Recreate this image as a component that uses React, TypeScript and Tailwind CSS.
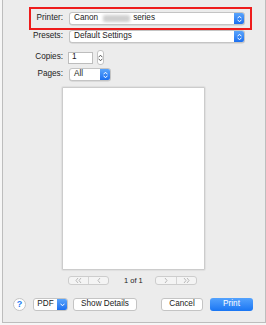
import React from 'react'

const font = { fontFamily: '"Liberation Sans", Arial, sans-serif' }

function UpDown({ color = '#fff' }: { color?: string }) {
  return (
    <svg width="5" height="8" viewBox="0 0 5 8" fill="none">
      <polyline points="0.8,3 2.5,1.2 4.2,3" stroke={color} strokeWidth="1" strokeLinecap="round" strokeLinejoin="round" />
      <polyline points="0.8,5 2.5,6.8 4.2,5" stroke={color} strokeWidth="1" strokeLinecap="round" strokeLinejoin="round" />
    </svg>
  )
}

function Popup({ width, children }: { width: string; children: React.ReactNode }) {
  return (
    <div className={`${width} h-[13px] flex rounded-[3px] border border-[#c4c4c4] bg-white shadow-[0_0.5px_0.5px_rgba(0,0,0,0.15)] overflow-hidden`}>
      <div className="flex-1 flex items-center pl-[4px] text-[#222]">{children}</div>
      <div className="w-[10px] flex items-center justify-center bg-gradient-to-b from-[#5aa4fb] to-[#1b6ff0]">
        <UpDown />
      </div>
    </div>
  )
}

function Chev({ dir, double }: { dir: 'l' | 'r'; double?: boolean }) {
  const pts = (x: number) => (dir === 'l' ? `${x + 2},1 ${x},3.5 ${x + 2},6` : `${x},1 ${x + 2},3.5 ${x},6`)
  return (
    <svg width={double ? 7 : 4} height="7" viewBox={`0 0 ${double ? 7 : 4} 7`} fill="none">
      <polyline points={pts(1)} stroke="#a9a9a9" strokeWidth="0.8" />
      {double && <polyline points={pts(4)} stroke="#a9a9a9" strokeWidth="0.8" />}
    </svg>
  )
}

export default function App() {
  return (
    <div className="w-[266px] h-[325px] bg-[#f6f6f6] text-[8.2px] text-[#222]" style={font}>
      <div className="ml-[2px] w-[264px] h-[323px] border-x border-b border-[#bdbdbd] bg-[#ececec] flex flex-col">
        {/* Printer */}
        <div className="mt-[7px] ml-[26px] w-[223px] h-[23px] border-2 border-[#ee1c1c] flex items-center">
          <div className="w-[32px] text-right">Printer:</div>
          <div className="ml-[6px]">
            <Popup width="w-[176px]">
              <span>Canon</span>
              <span className="inline-block ml-[5px] mr-[3px] w-[27px] h-[7px] rounded-[2px] bg-[#cfcfcf] blur-[1.5px]" />
              <span>series</span>
            </Popup>
          </div>
        </div>

        {/* Presets */}
        <div className="ml-[28px] h-[13px] flex items-center">
          <div className="w-[32px] text-right">Presets:</div>
          <div className="ml-[6px]">
            <Popup width="w-[176px]">Default Settings</Popup>
          </div>
        </div>

        {/* Copies */}
        <div className="mt-[7px] ml-[28px] h-[15px] flex items-center">
          <div className="w-[32px] text-right">Copies:</div>
          <div className="ml-[5px] w-[25px] h-[12px] border border-[#bdbdbd] bg-white flex items-center pl-[3px]">1</div>
          <div className="ml-[4px] w-[7px] h-[15px] rounded-[3px] border border-[#c4c4c4] bg-white flex items-center justify-center">
            <UpDown color="#555" />
          </div>
        </div>

        {/* Pages */}
        <div className="mt-[3px] ml-[28px] h-[13px] flex items-center">
          <div className="w-[32px] text-right">Pages:</div>
          <div className="ml-[6px]">
            <Popup width="w-[42px]">All</Popup>
          </div>
        </div>

        {/* Preview */}
        <div className="mt-[7px] ml-[60px] w-[141px] h-[181px] bg-white shadow-[0_0_1.5px_1px_rgba(0,0,0,0.18)]" />

        {/* Page navigation */}
        <div className="mt-[7px] h-[9px] flex items-center">
          <div className="ml-[65px] w-[41px] h-[9px] flex rounded-[3px] border border-[#cdcdcd] bg-[#f4f4f4]">
            <div className="flex-1 flex items-center justify-center border-r border-[#d4d4d4]">
              <Chev dir="l" double />
            </div>
            <div className="flex-1 flex items-center justify-center">
              <Chev dir="l" />
            </div>
          </div>
          <div className="ml-[15px] w-[17px] text-[7.5px] font-medium whitespace-nowrap text-center text-[#222]">1 of 1</div>
          <div className="ml-[14px] w-[42px] h-[9px] flex rounded-[3px] border border-[#cdcdcd] bg-[#f4f4f4]">
            <div className="flex-1 flex items-center justify-center border-r border-[#d4d4d4]">
              <Chev dir="r" />
            </div>
            <div className="flex-1 flex items-center justify-center">
              <Chev dir="r" double />
            </div>
          </div>
        </div>

        {/* Bottom buttons */}
        <div className="mt-[13px] h-[13px] flex items-center">
          <div className="ml-[10px] w-[13px] h-[13px] rounded-full border border-[#c4c4c4] bg-white flex items-center justify-center text-[9px] font-bold text-[#1f7cf3]">
            ?
          </div>
          <div className="ml-[7px] w-[35px] h-[13px] flex rounded-[3px] border border-[#c4c4c4] bg-white overflow-hidden">
            <div className="flex-1 flex items-center justify-center">PDF</div>
            <div className="w-[10px] flex items-center justify-center bg-gradient-to-b from-[#5aa4fb] to-[#1b6ff0]">
              <svg width="5" height="4" viewBox="0 0 5 4" fill="none">
                <polyline points="0.8,1 2.5,2.8 4.2,1" stroke="#fff" strokeWidth="1" strokeLinecap="round" strokeLinejoin="round" />
              </svg>
            </div>
          </div>
          <div className="ml-[5px] w-[64px] h-[13px] rounded-[3px] border border-[#c4c4c4] bg-white flex items-center justify-center">
            Show Details
          </div>
          <div className="ml-[24px] w-[42px] h-[13px] rounded-[3px] border border-[#c4c4c4] bg-white flex items-center justify-center">
            Cancel
          </div>
          <div className="ml-[7px] w-[43px] h-[13px] rounded-[3px] bg-gradient-to-b from-[#53a2fd] to-[#1775f3] flex items-center justify-center text-white">
            Print
          </div>
        </div>
      </div>
    </div>
  )
}
